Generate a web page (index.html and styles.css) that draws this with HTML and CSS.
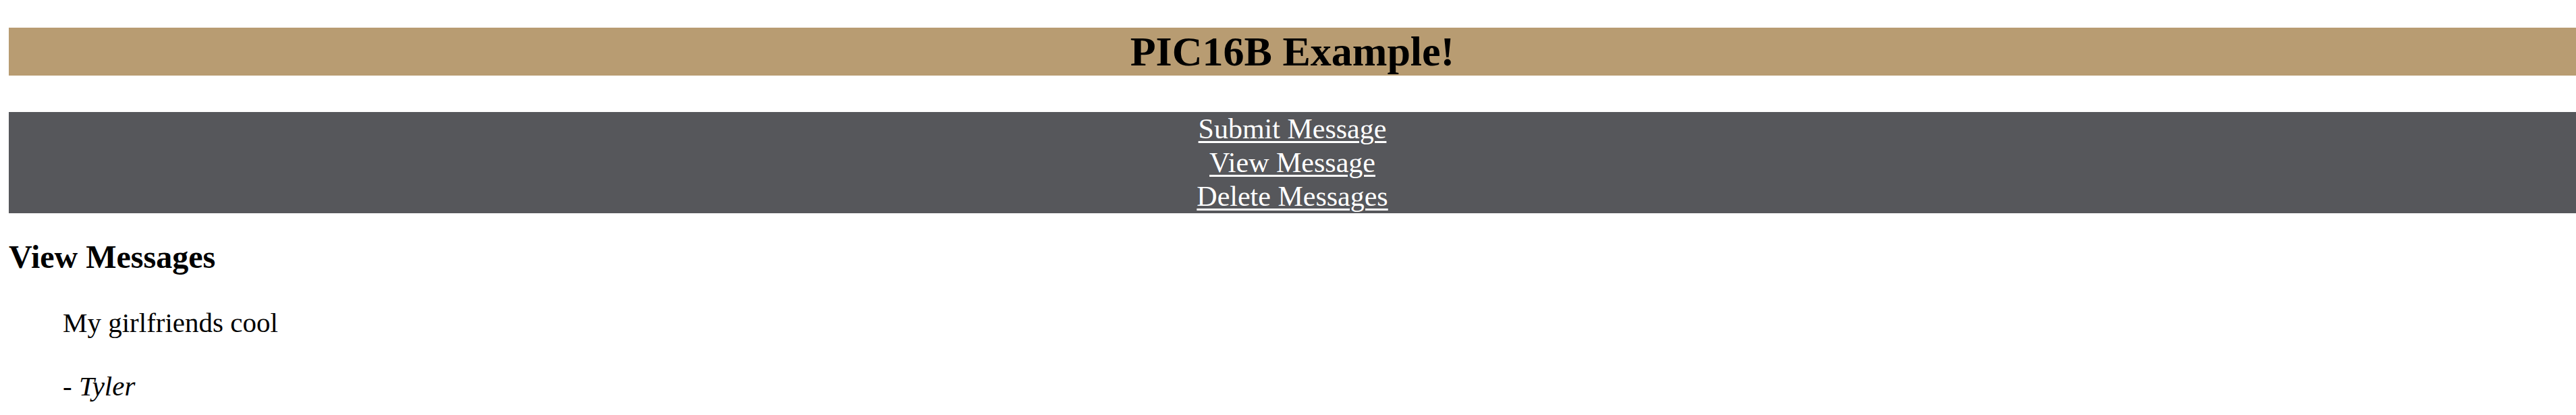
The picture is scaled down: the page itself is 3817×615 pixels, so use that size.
FILE: index.html
```html
<!DOCTYPE html>
<html lang="en">
<head>
<meta charset="utf-8">
<title>PIC16B Example!</title>
<link rel="stylesheet" href="styles.css">
</head>
<body>
<header class="site-header">
  <h1 class="site-title">PIC16B Example!</h1>
</header>
<nav class="site-nav">
  <ul class="nav-list">
    <li><a class="nav-link" href="#">Submit Message</a></li>
    <li><a class="nav-link" href="#">View Message</a></li>
    <li><a class="nav-link" href="#">Delete Messages</a></li>
  </ul>
</nav>
<section class="content">
  <h2 class="page-heading">View Messages</h2>
  <div class="message">
    <p class="message-text">My girlfriends cool</p>
    <p class="message-author">- <em>Tyler</em></p>
  </div>
</section>
</body>
</html>
```

FILE: styles.css
```css
html {
  overflow: hidden;
}

body {
  margin: 0 0 0 13px;
  padding-top: 41px;
  background: #ffffff;
  color: #000000;
  font-family: "Liberation Serif", "Times New Roman", serif;
}

.site-header {
  background: #b89c72;
}

.site-title {
  margin: 0;
  font-size: 62px;
  font-weight: bold;
  line-height: 71px;
  text-align: center;
}

.site-nav {
  margin-top: 54px;
  background: #56575b;
}

.nav-list {
  list-style: none;
  margin: 0;
  padding: 0;
  text-align: center;
}

.nav-list li {
  font-size: 42px;
  line-height: 50px;
}

.nav-link {
  color: #ffffff;
  text-decoration: underline;
  text-decoration-thickness: 3px;
  text-underline-offset: 4px;
}

.content {
  padding-top: 40px;
}

.page-heading {
  margin: 0;
  font-size: 48px;
  font-weight: bold;
  line-height: 50px;
}

.message {
  padding-left: 80px;
  padding-top: 48px;
}

.message-text,
.message-author {
  margin: 0;
  font-size: 41px;
  line-height: 48px;
}

.message-author {
  margin-top: 46px;
}
```
